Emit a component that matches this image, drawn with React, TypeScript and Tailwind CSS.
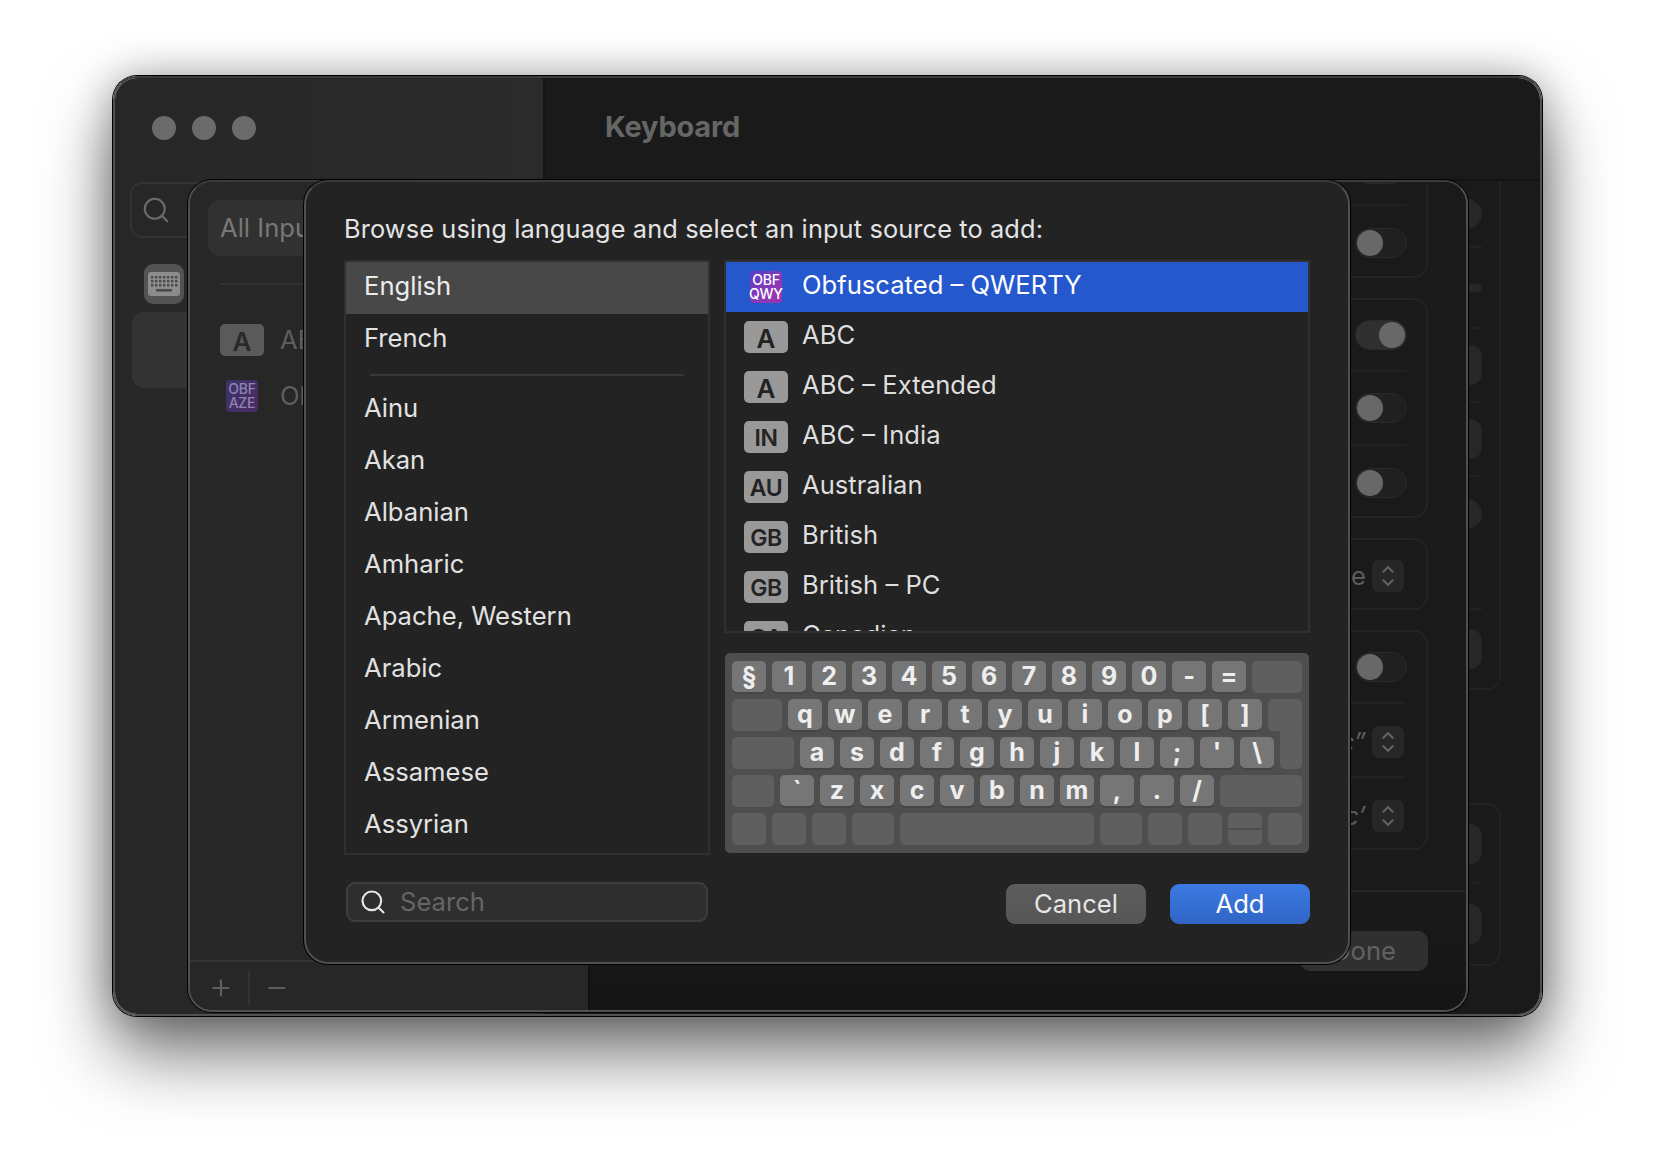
import React from "react";
import { Search, ChevronUp, ChevronDown, Plus, Minus } from "lucide-react";

const Toggle = ({ on = false }: { on?: boolean }) => (
  <div className={`flex h-[30px] w-[52px] shrink-0 items-center rounded-full border border-[#2a2a2a] px-[1px] ${on ? "justify-end bg-[#303030]" : "justify-start bg-gradient-to-r from-[#242424] to-[#1f1f1f]"}`}>
    <div className="h-[26px] w-[26px] rounded-full bg-[#686868]" />
  </div>
);

const Stepper = () => (
  <div className="flex h-[32px] w-[32px] shrink-0 flex-col items-center justify-center rounded-[7px] bg-[#272727] text-[#6a6a6a]">
    <ChevronUp size={20} strokeWidth={2.4} className="-mb-[3px]" />
    <ChevronDown size={20} strokeWidth={2.4} className="-mt-[3px]" />
  </div>
);

const Row = ({ h, line = true, pad = "", children }: { h: number; line?: boolean; pad?: string; children: React.ReactNode }) => (
  <div style={{ height: h }} className={`flex items-center justify-end gap-[6px] ${pad} ${line ? "border-b-2 border-[#212121]" : ""}`}>
    {children}
  </div>
);

const Label = ({ children }: { children: React.ReactNode }) => (
  <span className="whitespace-nowrap text-[25.6px] text-[#5c5c5c]">{children}</span>
);

const Peek = ({ h = 40, r = 12 }: { h?: number; r?: number }) => (
  <div style={{ height: h, borderRadius: r }} className="w-[60px] bg-[#272727]" />
);

const MainPanel = () => (
  <div className="flex min-w-0 flex-1 flex-col bg-[#1a1a1a]">
    <div className="flex h-[103px] shrink-0 items-center border-b-2 border-[#131313] pb-[3px] pl-[60px] text-[29px] font-bold tracking-[-0.2px] text-[#666666]">
      Keyboard
    </div>
    <div className="flex flex-1 flex-col items-end overflow-hidden pr-[39px]">
      <div className="w-[560px] rounded-b-[14px] border-x-2 border-b-2 border-[#222222] pr-[17px]">
        <Row h={67}><Peek h={30} r={15} /></Row>
        <Row h={81}><Peek h={8} r={4} /></Row>
        <Row h={74}><Peek /></Row>
        <Row h={74}><Peek /></Row>
        <div className="flex h-[133px] justify-end border-b-2 border-[#212121] pt-[22px]"><Peek h={30} r={15} /></div>
        <Row h={78} line={false}><Peek /></Row>
      </div>
      <div className="mt-[113px] w-[560px] rounded-[14px] border-2 border-[#222222] pr-[17px]">
        <Row h={79}><Peek /></Row>
        <Row h={80} line={false}><Peek /></Row>
      </div>
    </div>
  </div>
);

const MainSidebar = () => (
  <div className="flex w-[430px] shrink-0 flex-col border-r-2 border-[#141414] bg-gradient-to-r from-[#272727] to-[#2b2b2b] pl-[15px] pt-[104px]">
    <div className="flex h-[56px] w-[380px] items-center rounded-[12px] border-2 border-[#333333] pl-[9px] text-[#6c6c6c]">
      <Search size={30} strokeWidth={1.6} />
    </div>
    <div className="ml-[14px] mt-[26px] flex h-[40px] w-[40px] items-center justify-center rounded-[9px] bg-[#535353]">
      <svg width="34" height="26" viewBox="0 0 34 26">
        <rect x="1" y="1" width="32" height="24" rx="3" fill="#8c8c8c" />
        {[6, 10, 14].map((y) =>
          [5, 9, 13, 17, 21, 25, 29].map((x) => <rect key={`${x}-${y}`} x={x - 1} y={y - 1} width="2.4" height="2.4" fill="#4a4a4a" />)
        )}
        <rect x="9" y="18" width="16" height="2.6" fill="#4a4a4a" />
      </svg>
    </div>
    <div className="ml-[2px] mt-[8px] h-[76px] w-[380px] rounded-[12px] bg-[#333333]" />
  </div>
);

const Badge = ({ t, dim = false }: { t: string; dim?: boolean }) => (
  <div className={`flex h-[32px] w-[44px] shrink-0 items-center justify-center rounded-[5px] pt-[2px] font-semibold ${t.length === 1 ? "text-[26px]" : "text-[23px] tracking-[-0.4px]"} ${dim ? "bg-[#5a5a5a] text-[#2a2a2a]" : "bg-[#999999] text-[#232323]"}`}>
    {t}
  </div>
);

const Obf = ({ b, dim = false }: { b: string; dim?: boolean }) => (
  <div className="flex h-[44px] w-[44px] shrink-0 items-center justify-center">
    <div className={`flex h-[32px] w-[32px] flex-col items-center justify-center rounded-[4px] bg-gradient-to-br text-[14px] font-medium leading-[14px] tracking-[-0.2px] ${dim ? "from-[#3b3468] to-[#4a2a62] text-[#8d84b5]" : "from-[#5a3cc4] to-[#a52fb0] text-white"}`}>
      <span>OBF</span>
      <span>{b}</span>
    </div>
  </div>
);

const SheetTwo = () => (
  <div className="absolute left-[73px] top-[102px] flex h-[832px] w-[1280px] overflow-hidden rounded-[24px] border-2 border-[#505050] border-t-[#3a3a3a] shadow-[0_0_0_1px_#000]">
    <div className="flex w-[400px] shrink-0 flex-col border-r-2 border-[#111111] bg-[#272727]">
      <div className="flex-1 px-[18px] pt-[18px]">
        <div className="flex h-[56px] items-center rounded-[12px] bg-[#313131] pl-[12px] text-[25.6px] text-[#787878]">All Input Sources</div>
        <div className="mx-[12px] mt-[27px] h-[2px] bg-[#333333]" />
        <div className="mt-[36px] flex items-center gap-[16px] pl-[12px] text-[25.6px] text-[#5e5e5e]">
          <Badge t="A" dim />
          <span>ABC</span>
        </div>
        <div className="mt-[15px] flex items-center gap-[16px] pl-[12px] text-[25.6px] text-[#5e5e5e]">
          <Obf b="AZE" dim />
          <span>Obfuscated</span>
        </div>
      </div>
      <div className="flex h-[50px] shrink-0 items-center border-t-2 border-[#323232] pl-[18px] pt-[4px] text-[#5e5e5e]">
        <Plus size={26} strokeWidth={2} />
        <div className="mx-[14px] h-[34px] w-[2px] bg-[#333333]" />
        <Minus size={26} strokeWidth={2} />
      </div>
    </div>
    <div className="flex min-w-0 flex-1 flex-col bg-[#1a1a1a]">
      <div className="flex flex-1 flex-col gap-[20px] overflow-hidden pr-[38px]">
        <div className="ml-[60px] rounded-b-[14px] border-x-2 border-b-2 border-[#232323] pr-[19px]">
          <div className="flex h-[24px] items-end justify-end overflow-hidden border-b-2 border-[#212121]">
            <div className="mb-[20px]"><Toggle /></div>
          </div>
          <Row h={70} line={false} pad="pt-[4px]"><Toggle /></Row>
        </div>
        <div className="ml-[60px] rounded-[14px] border-2 border-[#232323] pr-[19px]">
          <Row h={72}><Toggle on /></Row>
          <Row h={74}><Toggle /></Row>
          <Row h={70} line={false} pad="pt-[4px]"><Toggle /></Row>
        </div>
        <div className="ml-[60px] rounded-[14px] border-2 border-[#232323] pr-[22px]">
          <Row h={68} line={false} pad="pt-[4px]"><Label>Automatic by Language</Label><Stepper /></Row>
        </div>
        <div className="ml-[60px] rounded-[14px] border-2 border-[#232323] pr-[22px]">
          <div className="flex h-[72px] items-center justify-end border-b-2 border-[#212121]">
            <div className="-mr-[3px]"><Toggle /></div>
          </div>
          <Row h={74} pad="pt-[4px]"><Label><i>“abc”</i></Label><Stepper /></Row>
          <Row h={70} line={false} pad="pt-[6px]"><Label><i>‘abc’</i></Label><Stepper /></Row>
        </div>
      </div>
      <div className="flex h-[120px] shrink-0 justify-end border-t-2 border-[#252525] bg-gradient-to-b from-[#1a1a1a] to-[#151515] pr-[38px] pt-[39px]">
        <div className="flex h-[40px] w-[128px] items-center justify-center rounded-[10px] bg-[#303030] text-[25.6px] text-[#626262]">Done</div>
      </div>
    </div>
  </div>
);

const Key = ({ k }: { k: string }) => (
  <div className="flex h-[31px] w-[34px] shrink-0 items-center justify-center rounded-[5px] bg-[#767676] text-[25px] font-bold leading-none text-[#eeeeee] shadow-[0_2px_0_#454545]">
    {k}
  </div>
);

const Blank = ({ w }: { w: number }) => <div style={{ width: w }} className="h-[32px] shrink-0 rounded-[5px] bg-[#5f5f5f]" />;

const KRow = ({ children }: { children: React.ReactNode }) => <div className="flex h-[32px] items-start gap-[6px]">{children}</div>;

const Keyboard = () => (
  <div className="ml-[1px] flex h-[200px] w-[584px] flex-col gap-[6px] rounded-[5px] bg-[#4e4e4e] pl-[7px] pt-[8px]">
    <KRow>
      {"§1234567890-=".split("").map((k) => <Key key={k} k={k} />)}
      <Blank w={50} />
    </KRow>
    <KRow>
      <Blank w={50} />
      {"qwertyuiop[]".split("").map((k) => <Key key={k} k={k} />)}
      <div className="h-[32px] w-[34px] shrink-0 rounded-[5px] bg-[#5f5f5f]" />
    </KRow>
    <KRow>
      <Blank w={62} />
      {"asdfghjkl;'\\".split("").map((k) => <Key key={k} k={k} />)}
      <div className="-mt-[8px] h-[40px] w-[22px] shrink-0 rounded-b-[5px] bg-[#5f5f5f]" />
    </KRow>
    <KRow>
      <Blank w={42} />
      {"`zxcvbnm,./".split("").map((k) => <Key key={k} k={k} />)}
      <Blank w={82} />
    </KRow>
    <KRow>
      <Blank w={34} />
      <Blank w={34} />
      <Blank w={34} />
      <Blank w={42} />
      <Blank w={194} />
      <Blank w={42} />
      <Blank w={34} />
      <Blank w={34} />
      <div className="flex h-[32px] w-[34px] shrink-0 flex-col gap-[2px]">
        <div className="h-[15px] rounded-t-[5px] bg-[#5f5f5f]" />
        <div className="h-[15px] rounded-b-[5px] bg-[#5f5f5f]" />
      </div>
      <Blank w={34} />
    </KRow>
  </div>
);

const Lang = ({ t, sel = false, up = false }: { t: string; sel?: boolean; up?: boolean }) => (
  <div className={`flex h-[52px] shrink-0 items-center pl-[18px] text-[25.6px] ${up ? "pb-[4px]" : ""} ${sel ? "bg-[#484848] text-[#ececec]" : "text-[#e2e2e2]"}`}>{t}</div>
);

const Source = ({ t, icon, sel = false }: { t: string; icon: React.ReactNode; sel?: boolean }) => (
  <div className={`flex h-[50px] shrink-0 items-center gap-[14px] pl-[18px] text-[25.6px] ${sel ? "bg-[#2558cc] text-white" : "text-[#dedede]"}`}>
    {icon}
    <span className="-mt-[3px] whitespace-nowrap">{t}</span>
  </div>
);

const Dialog = () => (
  <div className="absolute left-[189px] top-[102px] flex h-[784px] w-[1046px] flex-col rounded-[24px] border-2 border-[#505050] border-t-[#3a3a3a] bg-[#232323] px-[38px] shadow-[0_0_0_1px_#000]">
    <div className="flex h-[78px] shrink-0 items-center pt-[16px] text-[25.35px] tracking-[0.12px] text-[#e4e4e4]">
      Browse using language and select an input source to add:
    </div>
    <div className="flex gap-[14px]">
      <div className="flex h-[595px] w-[366px] shrink-0 flex-col overflow-hidden border-2 border-[#303030]">
        <Lang t="English" sel up />
        <Lang t="French" up />
        <div className="mx-[24px] mt-[8px] h-[2px] shrink-0 bg-[#383838]" />
        <div className="h-[6px] shrink-0" />
        {["Ainu", "Akan", "Albanian", "Amharic", "Apache, Western", "Arabic", "Armenian", "Assamese", "Assyrian"].map((l) => <Lang key={l} t={l} />)}
      </div>
      <div className="flex w-[586px] shrink-0 flex-col gap-[20px]">
        <div className="flex h-[373px] flex-col overflow-hidden border-2 border-[#303030]">
          <Source sel t="Obfuscated – QWERTY" icon={<Obf b="QWY" />} />
          <Source t="ABC" icon={<Badge t="A" />} />
          <Source t="ABC – Extended" icon={<Badge t="A" />} />
          <Source t="ABC – India" icon={<Badge t="IN" />} />
          <Source t="Australian" icon={<Badge t="AU" />} />
          <Source t="British" icon={<Badge t="GB" />} />
          <Source t="British – PC" icon={<Badge t="GB" />} />
          <Source t="Canadian" icon={<Badge t="CA" />} />
        </div>
        <Keyboard />
      </div>
    </div>
    <div className="mt-[27px] flex items-start justify-between">
      <div className="ml-[2px] flex h-[40px] w-[362px] items-center gap-[13px] rounded-[9px] border-2 border-[#3e3e3e] bg-[#2e2e2e] pl-[11px] text-[25.6px] text-[#666666]">
        <Search size={28} strokeWidth={1.8} className="text-[#e6e6e6]" />
        <span>Search</span>
      </div>
      <div className="mt-[2px] flex gap-[24px]">
        <div className="flex h-[40px] w-[140px] items-center justify-center rounded-[9px] bg-gradient-to-b from-[#5c5c5c] to-[#565656] text-[25.6px] text-[#e6e6e6]">Cancel</div>
        <div className="flex h-[40px] w-[140px] items-center justify-center rounded-[9px] bg-gradient-to-b from-[#3c7ae2] to-[#2f66c6] text-[25.6px] text-white">Add</div>
      </div>
    </div>
  </div>
);

export default function App() {
  return (
    <div className="h-[1164px] w-[1654px] overflow-hidden bg-white pl-[113px] pt-[76px] font-[Inter,sans-serif]">
      <div className="relative flex h-[940px] w-[1429px] rounded-[24px] border-2 border-[#505050] border-t-[#3a3a3a] shadow-[0_0_0_1px_#000,0_38px_70px_rgba(0,0,0,0.55),0_0_40px_rgba(0,0,0,0.3)]">
        <div className="flex min-w-0 flex-1 overflow-hidden rounded-[22px]">
          <MainSidebar />
          <MainPanel />
        </div>
        <div className="absolute left-[37px] top-[38px] flex gap-[16px]">
          {[0, 1, 2].map((i) => <div key={i} className="h-[24px] w-[24px] rounded-full bg-[#6b6b6b]" />)}
        </div>
        <SheetTwo />
        <Dialog />
      </div>
    </div>
  );
}
